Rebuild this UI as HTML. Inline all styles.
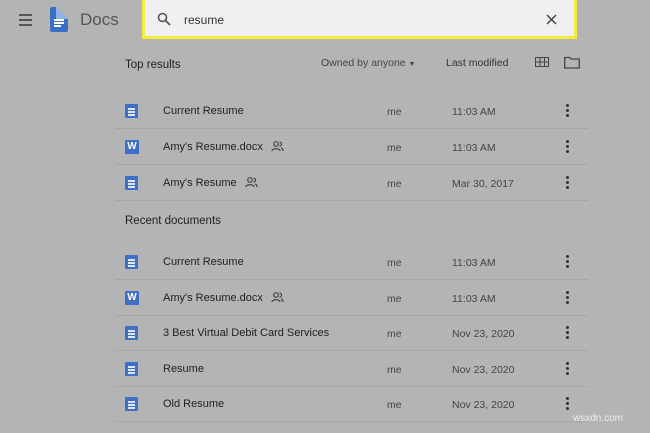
<!DOCTYPE html>
<html><head><style>
body{margin:0;width:650px;height:433px;background:#b4b4b4;font-family:"Liberation Sans",Arial,sans-serif;color:#202124;position:relative;overflow:hidden}
.a{position:absolute}
.row{position:absolute;left:115px;width:473px;height:35px;border-bottom:1px solid #a6a6a6}
.row .ic{position:absolute;left:10px;top:11px;width:13px;height:14px;background:#3f6fc7;border-radius:1px}
.row .ic i{position:absolute;left:3px;width:7px;height:1.5px;background:#dfe6f5}
.row .w{position:absolute;left:10px;top:11px;width:14px;height:14px;background:#3f6fc7;color:#fff;font-size:10px;font-weight:bold;text-align:center;line-height:14px}
.row .n{position:absolute;left:48px;top:12px;font-size:11px}
.row .me{position:absolute;left:272px;top:13px;font-size:10.5px;color:#444}
.row .d{position:absolute;left:337px;top:13px;font-size:10.5px;color:#444}
.row .k{position:absolute;left:451px;top:11px;width:3px}
.row .k b{display:block;width:3px;height:3px;background:#333;border-radius:50%;margin-bottom:2px}
.sh{display:inline-block;vertical-align:-2px;margin-left:8px}
</style></head><body>
<div class="a" style="left:19px;top:14px;width:13px">
<div style="height:2px;background:#555;margin-bottom:3px"></div><div style="height:2px;background:#555;margin-bottom:3px"></div><div style="height:2px;background:#555"></div></div>
<div class="a" style="left:50px;top:7px;width:18px;height:25px;background:#3a6fc8;border-radius:2px"><div style="position:absolute;right:0;top:0;border-left:6px solid #8fb0e6;border-bottom:6px solid #8fb0e6;border-top:6px solid #b4b4b4;border-right:6px solid #b4b4b4;width:0;height:0"></div>
<div style="position:absolute;left:4px;top:12px;width:10px;height:1.5px;background:#fff"></div><div style="position:absolute;left:4px;top:15px;width:10px;height:1.5px;background:#fff"></div><div style="position:absolute;left:4px;top:18px;width:7px;height:1.5px;background:#fff"></div></div>
<div class="a" style="left:80px;top:10px;font-size:17px;color:#555">Docs</div>
<div class="a" style="left:142px;top:0;width:429px;height:36px;background:#eff0f2;border:3px solid #f3ec3c;border-top:0"></div>
<svg class="a" style="left:157px;top:12px" width="14" height="14" viewBox="0 0 14 14"><circle cx="5.5" cy="5.5" r="4" fill="none" stroke="#555" stroke-width="1.6"/><path d="M8.5 8.5L13 13" stroke="#555" stroke-width="1.8"/></svg>
<div class="a" style="left:184px;top:13px;font-size:12px;color:#333">resume</div>
<svg class="a" style="left:546px;top:14px" width="11" height="11"><path d="M1 1L10 10M10 1L1 10" stroke="#444" stroke-width="1.5"/></svg>
<div class="a" style="left:125px;top:59px;font-size:11.5px">Top results</div>
<div class="a" style="left:321px;top:57px;font-size:10.5px;color:#444">Owned by anyone <span style="font-size:7px">▼</span></div>
<div class="a" style="left:446px;top:57px;font-size:10.5px;color:#333">Last modified</div>
<svg class="a" style="left:535px;top:57px" width="15" height="11"><rect x="0.5" y="0.5" width="13" height="9" fill="none" stroke="#444"/><path d="M5 0v10M9.5 0v10M0 5h14" stroke="#444"/></svg>
<svg class="a" style="left:564px;top:56px" width="16" height="13"><path d="M0.7 1.5h5l1.5 1.5h8v9H0.7z" fill="none" stroke="#444" stroke-width="1.3"/></svg>
<div class="a" style="left:125px;top:215px;font-size:11.5px">Recent documents</div>

<div class="row" style="top:93px"><div class="ic"><i style="top:4px"></i><i style="top:7px"></i><i style="top:10px"></i></div><span class="n">Current Resume</span><span class="me">me</span><span class="d">11:03 AM</span><div class="k"><b></b><b></b><b></b></div></div>
<div class="row" style="top:129px"><div class="w">W</div><span class="n">Amy's Resume.docx<svg class="sh" width="13" height="11"><circle cx="5" cy="3" r="2.3" fill="none" stroke="#444" stroke-width="1.2"/><path d="M1 10c0-3 8-3 8 0M8.5 1a2 2 0 0 1 0 4M10 7c1.5.5 2 1.5 2 3" fill="none" stroke="#444" stroke-width="1.2"/></svg></span><span class="me">me</span><span class="d">11:03 AM</span><div class="k"><b></b><b></b><b></b></div></div>
<div class="row" style="top:165px"><div class="ic"><i style="top:4px"></i><i style="top:7px"></i><i style="top:10px"></i></div><span class="n">Amy's Resume<svg class="sh" width="13" height="11"><circle cx="5" cy="3" r="2.3" fill="none" stroke="#444" stroke-width="1.2"/><path d="M1 10c0-3 8-3 8 0M8.5 1a2 2 0 0 1 0 4M10 7c1.5.5 2 1.5 2 3" fill="none" stroke="#444" stroke-width="1.2"/></svg></span><span class="me">me</span><span class="d">Mar 30, 2017</span><div class="k"><b></b><b></b><b></b></div></div>

<div class="row" style="top:244px"><div class="ic"><i style="top:4px"></i><i style="top:7px"></i><i style="top:10px"></i></div><span class="n">Current Resume</span><span class="me">me</span><span class="d">11:03 AM</span><div class="k"><b></b><b></b><b></b></div></div>
<div class="row" style="top:280px"><div class="w">W</div><span class="n">Amy's Resume.docx<svg class="sh" width="13" height="11"><circle cx="5" cy="3" r="2.3" fill="none" stroke="#444" stroke-width="1.2"/><path d="M1 10c0-3 8-3 8 0M8.5 1a2 2 0 0 1 0 4M10 7c1.5.5 2 1.5 2 3" fill="none" stroke="#444" stroke-width="1.2"/></svg></span><span class="me">me</span><span class="d">11:03 AM</span><div class="k"><b></b><b></b><b></b></div></div>
<div class="row" style="top:315px"><div class="ic"><i style="top:4px"></i><i style="top:7px"></i><i style="top:10px"></i></div><span class="n">3 Best Virtual Debit Card Services</span><span class="me">me</span><span class="d">Nov 23, 2020</span><div class="k"><b></b><b></b><b></b></div></div>
<div class="row" style="top:351px"><div class="ic"><i style="top:4px"></i><i style="top:7px"></i><i style="top:10px"></i></div><span class="n">Resume</span><span class="me">me</span><span class="d">Nov 23, 2020</span><div class="k"><b></b><b></b><b></b></div></div>
<div class="row" style="top:386px"><div class="ic"><i style="top:4px"></i><i style="top:7px"></i><i style="top:10px"></i></div><span class="n">Old Resume</span><span class="me">me</span><span class="d">Nov 23, 2020</span><div class="k"><b></b><b></b><b></b></div></div>
<div class="a" style="left:573px;top:413px;font-size:10px;color:#eee">wsxdn.com</div>
</body></html>
